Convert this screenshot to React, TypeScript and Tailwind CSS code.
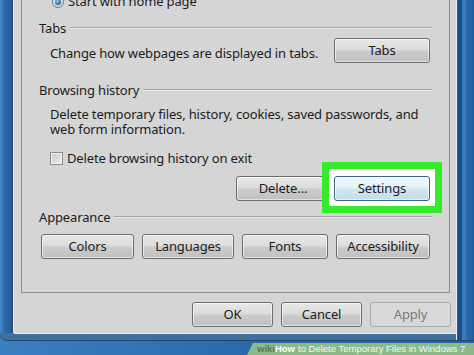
import React from "react";

function Btn({
  children,
  className = "",
}: {
  children: React.ReactNode;
  className?: string;
}) {
  return (
    <div
      className={`flex items-center justify-center h-[25px] rounded-[3px] border border-[#6e6e6e] bg-[linear-gradient(#e8e8e8,#dcdcdc_46%,#cbcbcb_54%,#c0c0c0)] shadow-[inset_0_0_0_1px_rgba(255,255,255,0.55)] text-[13px] tracking-[-0.15px] text-[#1c1c1c] ${className}`}
    >
      {children}
    </div>
  );
}

function GroupHeader({ label }: { label: string }) {
  return (
    <div className="flex items-center h-[16px] pl-[17px] pr-[17px]">
      <span className="text-[13px] leading-[16px] tracking-[-0.15px] text-[#1c1c1c] pr-[4px]">{label}</span>
      <div className="flex-1 h-[2px] border-t border-[#a3a3a3] border-b border-b-[#ececec]" />
    </div>
  );
}

export default function App() {
  return (
    <div className="relative w-[474px] h-[355px] overflow-hidden bg-[linear-gradient(90deg,#3a7fc0,#2b6bab_50%,#2464a6)] font-['Noto_Sans',sans-serif]">
      {/* window */}
      <div className="flex h-[341px] bg-[#3f6f9c] rounded-bl-[7px] border-b border-[#24466a]">
        {/* left glass strip */}
        <div className="flex flex-col w-[14px]">
          <div className="flex flex-1">
            <div className="w-[12px] bg-[linear-gradient(90deg,#4a8bc8,#2c6eb0_35%,#1b5898)]" />
            <div className="w-[1px] bg-[#2b4a6c]" />
            <div className="w-[1px] bg-[#e4eaf0]" />
          </div>
          <div className="h-[7px]" />
        </div>

        {/* face column */}
        <div className="flex flex-col w-[442px]">
          <div className="flex flex-col h-[334px] bg-[#d5d5d5] border-b border-[#e4eaf0]">
            {/* tab panel */}
            <div className="ml-[7px] mr-[6px] h-[293px] border-l border-r border-b border-[#8e8e8e] flex flex-col">
              {/* radio row */}
              <div className="flex items-center h-[16px] mt-[-6px] pl-[30px]">
                <div className="relative w-[12px] h-[12px] rounded-full border border-[#6f7f8f] bg-[linear-gradient(#f0f0f0,#cfcfcf)] flex items-center justify-center">
                  <div className="w-[6px] h-[6px] rounded-full bg-[radial-gradient(circle_at_40%_35%,#9ccbf0,#1f5c9c_70%)]" />
                </div>
                <span className="ml-[4px] text-[13px] tracking-[-0.15px] text-[#1c1c1c]">Start with home page</span>
              </div>

              <div className="mt-[10px]">
                <GroupHeader label="Tabs" />
              </div>
              <div className="flex items-start mt-[2px] pl-[28px] pr-[19px]">
                <span className="flex-1 mt-[8px] text-[13px] leading-[15px] tracking-[-0.15px] text-[#1c1c1c]">
                  Change how webpages are displayed in tabs.
                </span>
                <Btn className="w-[96px]">Tabs</Btn>
              </div>

              <div className="mt-[19px]">
                <GroupHeader label="Browsing history" />
              </div>
              <div className="flex flex-col mt-[9px] pl-[28px] pr-[19px] text-[13px] leading-[15px] tracking-[-0.15px] text-[#1c1c1c]">
                <span>Delete temporary files, history, cookies, saved passwords, and</span>
                <span>web form information.</span>
              </div>
              <div className="flex items-center h-[15px] mt-[14px] pl-[28px]">
                <div className="w-[13px] h-[13px] border border-[#8a8a8a] bg-[linear-gradient(135deg,#c8c8c8,#eeeeee)] shadow-[inset_0_0_0_1px_#f4f4f4]" />
                <span className="ml-[4px] text-[13px] leading-[15px] tracking-[-0.15px] text-[#1c1c1c]">
                  Delete browsing history on exit
                </span>
              </div>
              <div className="flex justify-end gap-[4px] mt-[10px] pr-[19px]">
                <Btn className="w-[94px]">Delete...</Btn>
                <div className="relative w-[96px]">
                  <div className="absolute left-[-12px] right-[-12px] top-[-14px] bottom-[-12px] border-[7px] border-[#36ec2a] bg-white" />
                  <div className="relative flex items-center justify-center h-[25px] rounded-[3px] border border-[#3d6487] bg-[linear-gradient(#f4fafd,#e4f1f9_46%,#d2e6f2_54%,#c4dcec)] shadow-[inset_0_0_0_1px_rgba(255,255,255,0.7)] text-[13px] tracking-[-0.15px] text-[#1c1c1c]">
                    Settings
                  </div>
                </div>
              </div>

              <div className="mt-[8px]">
                <GroupHeader label="Appearance" />
              </div>
              <div className="flex gap-[8px] mt-[9px] pl-[19px]">
                <Btn className="w-[93px]">Colors</Btn>
                <Btn className="w-[92px]">Languages</Btn>
                <Btn className="w-[86px]">Fonts</Btn>
                <Btn className="w-[94px]">Accessibility</Btn>
              </div>
            </div>

            {/* bottom buttons */}
            <div className="flex justify-end gap-[8px] mt-[9px] mr-[5px]">
              <Btn className="w-[81px]">OK</Btn>
              <Btn className="w-[81px]">Cancel</Btn>
              <div className="flex items-center justify-center w-[81px] h-[25px] rounded-[3px] border border-[#a9a9a9] bg-[#d9d9d9] text-[13px] tracking-[-0.15px] text-[#7a7a7a]">
                Apply
              </div>
            </div>
          </div>
        </div>

        {/* right glass strip */}
        <div className="flex flex-col flex-1">
          <div className="flex flex-1">
            <div className="w-[1px] bg-[#eef1f4]" />
            <div className="w-[1px] bg-[#34567a]" />
            <div className="w-[4px] bg-[#1a4f8c]" />
            <div className="w-[4px] bg-[#3a7bbb]" />
            <div className="flex-1 bg-[linear-gradient(90deg,#2c6aa8,#1f5d9d)]" />
          </div>
        </div>
      </div>

      {/* wikiHow watermark */}
      <div className="absolute right-0 bottom-0 w-[227px] h-[12px] bg-[#8dba8a] [clip-path:polygon(6px_0,100%_0,100%_100%,0_100%)] flex items-center pl-[10px] whitespace-nowrap font-['Liberation_Sans',sans-serif]">
        <span className="text-[9.5px] leading-[12px] font-bold text-[#5f745c]">wiki</span>
        <span className="text-[9.5px] leading-[12px] font-bold text-white">How</span>
        <span className="ml-[3px] text-[9.5px] leading-[12px] text-[#f4f8f2]">
          to Delete Temporary Files in Windows 7
        </span>
      </div>
    </div>
  );
}
